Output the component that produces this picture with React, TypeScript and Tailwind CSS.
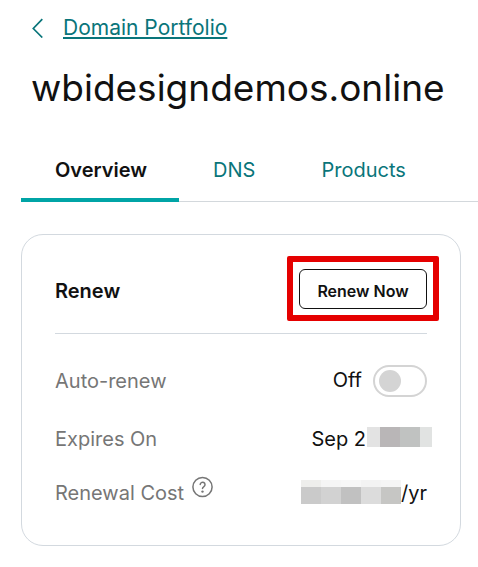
import type { ReactNode } from "react";

import { clsx } from "clsx";

interface Tab {
  name: string;
  active?: boolean;
}

const tabs: Tab[] = [
  { name: "Overview", active: true },
  { name: "DNS" },
  { name: "Products" },
];

interface RowProps {
  label: ReactNode;
  children: ReactNode;
}

const Row = ({ label, children }: RowProps) => (
  <div className="flex h-8 items-center justify-between">
    <div className="flex items-center gap-2 text-[#767676]">{label}</div>
    <div className="flex items-center">{children}</div>
  </div>
);

// pixelated block that hides the rest of the expiry date
const HiddenDate = () => (
  <span className="-mr-[5px] mb-1 ml-px flex h-5" aria-hidden="true">
    <span className="w-[13px] bg-[#e3e3e3]" />
    <span className="w-5 bg-[#b9b6b7]" />
    <span className="w-5 bg-[#c0c2c1]" />
    <span className="w-3 bg-[#e1e3e2]" />
  </span>
);

// pixelated block that hides the price
const HiddenPrice = () => (
  <span className="mb-0.5 flex h-6" aria-hidden="true">
    <span className="w-5 border-t-[7px] border-[#eeeeec] bg-[#cacaca]" />
    <span className="w-5 border-t-[7px] border-[#f5f5f5] bg-[#d2d2d2]" />
    <span className="w-5 border-t-[7px] border-[#f7f7f7] bg-[#c1c1c1]" />
    <span className="w-5 border-t-[7px] border-[#f3f3f3] bg-[#dcdcdc]" />
    <span className="w-5 border-t-[7px] border-[#f5f5f5] bg-[#c6c6c4]" />
  </span>
);

const HelpIcon = () => (
  <svg
    className="size-[22px]"
    viewBox="0 0 22 22"
    fill="none"
    stroke="currentColor"
    strokeWidth="1.5"
    strokeLinecap="round"
    aria-hidden="true"
  >
    <circle cx="10.5" cy="11" r="9.6" />
    <path d="M8.2 8.6a2.4 2.4 0 1 1 3.7 2c-.9.6-1.4 1-1.4 1.9" />
    <circle cx="10.5" cy="15.6" r="1.2" fill="currentColor" stroke="none" />
  </svg>
);

export default function App() {
  return (
    <main className="bg-white pt-4 pb-5 pl-[21px] font-['Inter',sans-serif] text-xl text-[#111111]">
      <a
        href="#portfolio"
        className="ml-[11px] flex h-6 w-fit items-center gap-5 text-[#09757a]"
      >
        <svg
          className="h-5 w-[11px]"
          viewBox="0 0 11 20"
          fill="none"
          stroke="currentColor"
          strokeWidth="1.7"
          aria-hidden="true"
        >
          <path d="M10.3 1.2 1.3 10.5l9 9" />
        </svg>
        <span className="text-[21px] leading-6 underline decoration-2 underline-offset-2 [text-decoration-skip-ink:none]">
          Domain Portfolio
        </span>
      </a>

      <h1 className="mt-[26px] ml-[10px] text-[37px] leading-11">
        wbidesigndemos.online
      </h1>

      <nav className="mt-7 flex border-b border-[#d3d8dc]" role="tablist">
        {tabs.map((tab) => (
          <button
            key={tab.name}
            type="button"
            role="tab"
            aria-selected={!!tab.active}
            className={clsx(
              "-mb-px h-16 cursor-pointer border-b-4 pt-1 pr-8 pl-[34px]",
              tab.active
                ? "rounded-t-sm border-[#00a4a6] font-semibold"
                : "border-transparent text-[#09757a]",
            )}
          >
            {tab.name}
          </button>
        ))}
      </nav>

      <section className="mt-8 mr-[17px] rounded-[22px] border border-[#d3d9df] px-[33px] pt-[34px] pb-9">
        <div className="flex items-center justify-between border-b border-[#d3d9df] pb-6">
          <h2 className="pt-1 font-semibold">Renew</h2>
          <div className="relative">
            <button
              type="button"
              className="h-10 w-32 cursor-pointer rounded-md border border-[#111111] pt-1 text-base font-semibold"
            >
              Renew Now
            </button>
            <span className="pointer-events-none absolute -inset-x-3 -top-[13px] -bottom-3 rounded-xs border-6 border-[#e50000]" />
          </div>
        </div>

        <div className="mt-[31px]">
          <Row label={<label htmlFor="auto-renew">Auto-renew</label>}>
            <span className="mr-[11px] pb-0.5">Off</span>
            <input
              id="auto-renew"
              type="checkbox"
              role="switch"
              className="flex h-8 w-[54px] cursor-pointer appearance-none items-center rounded-full border-2 border-[#d4d4d4] px-1 before:size-[22px] before:rounded-full before:bg-[#d4d4d4] checked:justify-end"
            />
          </Row>
        </div>
        <div className="mt-[26px]">
          <Row label="Expires On">
            Sep 2
            <HiddenDate />
          </Row>
        </div>
        <div className="mt-[22px]">
          <Row
            label={
              <>
                Renewal Cost
                <button
                  type="button"
                  aria-label="About renewal cost"
                  className="mb-3 cursor-pointer"
                >
                  <HelpIcon />
                </button>
              </>
            }
          >
            <HiddenPrice />
            /yr
          </Row>
        </div>
      </section>
    </main>
  );
}
